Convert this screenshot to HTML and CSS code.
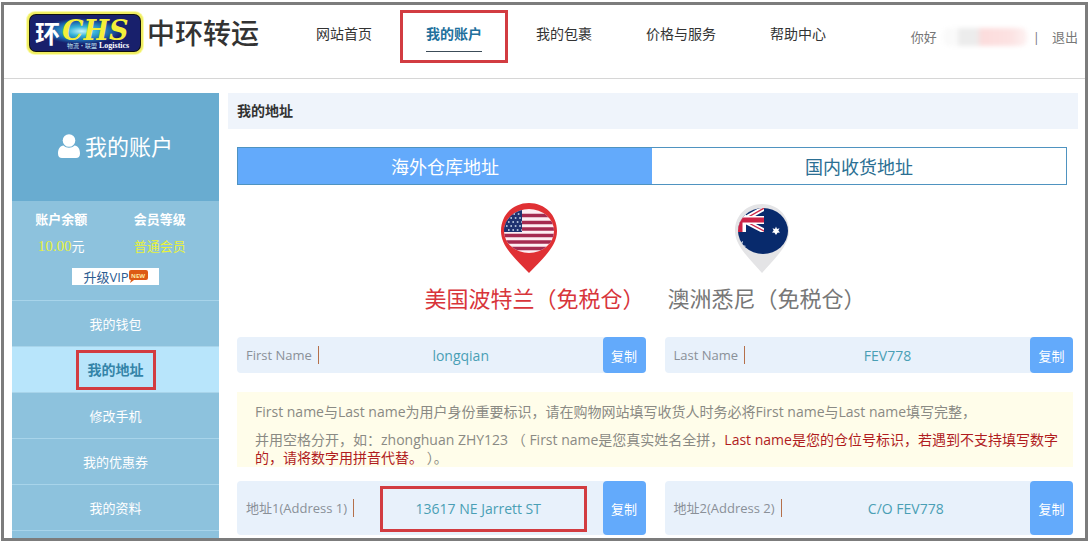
FILE: index.html
```html
<!DOCTYPE html>
<html lang="zh-CN">
<head>
    <meta charset="UTF-8">
    <meta name="viewport" content="width=device-width, initial-scale=1.0">
    <title>我的地址</title>
    <link rel="stylesheet" href="styles.css">
</head>
<body>
    <div class="page">
        <header class="header">
            <div class="logo">
                <svg class="logo-badge" viewBox="0 0 118 44" role="img" aria-label="CHS Logistics">
                    <defs>
                        <radialGradient id="glow" cx="0.47" cy="0.45" r="0.36">
                            <stop offset="0" stop-color="#c8f4fa"/>
                            <stop offset="0.35" stop-color="#35b3d8"/>
                            <stop offset="0.75" stop-color="#1a5fa8"/>
                            <stop offset="1" stop-color="#18206c"/>
                        </radialGradient>
                    </defs>
                    <rect x="0" y="0" width="118" height="44" rx="9" fill="#fbfbb0"/>
                    <rect x="1" y="1" width="116" height="42" rx="8" fill="#f0ee62"/>
                    <rect x="3" y="3" width="112" height="38" rx="7" fill="#111"/>
                    <rect x="4" y="4" width="110" height="36" rx="6" fill="url(#glow)"/>
                    <text class="badge-huan" x="9" y="32">环</text>
                    <text class="badge-chs" x="36" y="29">CHS</text>
                    <text class="badge-small-cn" x="41" y="37">物流·联盟</text>
                    <text class="badge-small" x="73" y="37">Logistics</text>
                </svg>
                <span class="logo-name">中环转运</span>
            </div>
            <nav class="nav">
                <a href="#">网站首页</a>
                <a href="#" class="active marked">我的账户</a>
                <a href="#">我的包裹</a>
                <a href="#">价格与服务</a>
                <a href="#">帮助中心</a>
            </nav>
            <div class="user">
                <span>你好</span>
                <span class="user-name"></span>
                <span>|</span>
                <a href="#">退出</a>
            </div>
        </header>

        <div class="content">
            <aside class="sidebar">
                <h2 class="side-title">
                    <svg class="side-icon" viewBox="0 0 22 24" aria-hidden="true">
                        <path d="M5.500 11.500C2 12 0 15 0 19.500C0 22.500 1.500 24 4 24H18C20.500 24 22 22.500 22 19.500C22 15 20 12 16.500 11.500C15 13 13 13.700 11 13.700C9 13.700 7 13 5.500 11.500Z" fill="#fff"/>
                        <circle cx="11" cy="6.500" r="6.300" fill="#fff"/>
                    </svg>
                    <span>我的账户</span>
                </h2>
                <div class="account">
                    <dl class="account-info">
                        <div>
                            <dt>账户余额</dt>
                            <dd><span class="money">10.00</span>元</dd>
                        </div>
                        <div>
                            <dt>会员等级</dt>
                            <dd class="level">普通会员</dd>
                        </div>
                    </dl>
                    <a href="#" class="vip">升级VIP<svg class="vip-new" viewBox="0 0 19 13" aria-hidden="true">
                            <path d="M2 0H17Q19 0 19 2V8Q19 10 17 10H5L1 13L2 10Q0 10 0 8V2Q0 0 2 0Z" fill="#dd5a14"/>
                            <text x="2" y="8">NEW</text>
                        </svg></a>
                </div>
                <ul class="menu">
                    <li><a href="#">我的钱包</a></li>
                    <li class="active"><a href="#" class="marked">我的地址</a></li>
                    <li><a href="#">修改手机</a></li>
                    <li><a href="#">我的优惠券</a></li>
                    <li><a href="#">我的资料</a></li>
                    <li></li>
                </ul>
            </aside>

            <main class="main">
                <h1 class="main-title">我的地址</h1>
                <div class="tabs">
                    <button type="button" class="active">海外仓库地址</button>
                    <button type="button">国内收货地址</button>
                </div>

                <div class="stores">
                    <a href="#" class="store active">
                        <svg class="pin" viewBox="0 0 56 70" aria-hidden="true">
                            <defs>
                                <clipPath id="us"><ellipse cx="28" cy="28" rx="25" ry="22"/></clipPath>
                            </defs>
                            <path d="M28 0C12 0 0 12 0 28C0 44 15 56 28 70C41 56 56 44 56 28C56 12 44 0 28 0Z" fill="#e03034"/>
                            <g clip-path="url(#us)">
                                <rect x="3" y="6" width="50" height="44" fill="#fdeef2"/>
                                <path d="M3 12.500H53M3 19.500H53M3 26H53M3 32.500H53M3 39H53M3 45.500H53" stroke="#a52a50" stroke-width="3.400"/>
                                <rect x="3" y="5" width="18" height="24" fill="#1f3270"/>
                                <path d="M8 11H21M5 15H21M7 19H21M5 23H21M7 27H21" stroke="#d5e2f2" stroke-width="1.600" stroke-dasharray="1.600 2.800"/>
                            </g>
                        </svg>
                        <span>美国波特兰（免税仓）</span>
                    </a>
                    <a href="#" class="store">
                        <svg class="pin" viewBox="0 0 56 70" aria-hidden="true">
                            <defs>
                                <clipPath id="au"><ellipse cx="29" cy="28" rx="25" ry="23"/></clipPath>
                                <clipPath id="jack"><rect x="3" y="4" width="27" height="25"/></clipPath>
                            </defs>
                            <path d="M28 1C13 1 1 12 1 28C1 43 16 56 28 70C40 56 55 43 55 28C55 12 43 1 28 1Z" fill="#e4e4e6"/>
                            <g clip-path="url(#au)">
                                <rect x="3" y="4" width="52" height="48" fill="#082a6c"/>
                                <g clip-path="url(#jack)">
                                    <path d="M9 17L32 4M9 17L32 29" stroke="#fff" stroke-width="5"/>
                                    <path d="M9 17L32 4M9 17L32 29" stroke="#d02a4a" stroke-width="1.400"/>
                                    <path d="M8 4V30M0 17H30" stroke="#fff" stroke-width="8"/>
                                    <path d="M6 4V30M0 17H30" stroke="#cc2346" stroke-width="5"/>
                                </g>
                                <path d="M42 23.500L43 26L45.500 25.300L44.300 27.600L46 29.500L43.500 29.700L42 32L40.500 29.700L38 29.500L39.700 27.600L38.500 25.300L41 26Z" fill="#fff"/>
                                <path d="M2 36L6 40L9 38L8 42L12 43L9 45L11 49L6 48L2 50Z" fill="#fff"/>
                            </g>
                        </svg>
                        <span>澳洲悉尼（免税仓）</span>
                    </a>
                </div>

                <div class="fields">
                    <div class="field">
                        <label for="first-name">First Name</label>
                        <input type="text" id="first-name" value="longqian" readonly>
                        <button type="button" onclick="copyField('first-name')">复制</button>
                    </div>
                    <div class="field">
                        <label for="last-name">Last Name</label>
                        <input type="text" id="last-name" value="FEV778" readonly>
                        <button type="button" onclick="copyField('last-name')">复制</button>
                    </div>
                </div>

                <div class="note">
                    <p>First name与Last name为用户身份重要标识，请在购物网站填写收货人时务必将First name与Last name填写完整，</p>
                    <p>并用空格分开，如：zhonghuan ZHY123 （ First name是您真实姓名全拼，<em>Last name是您的仓位号标识，若遇到不支持填写数字的，请将数字用拼音代替。</em> ）。</p>
                </div>

                <div class="fields tall">
                    <div class="field">
                        <label for="address-1">地址1(Address 1)</label>
                        <div class="value marked">
                            <input type="text" id="address-1" value="13617 NE Jarrett ST" readonly>
                        </div>
                        <button type="button" onclick="copyField('address-1')">复制</button>
                    </div>
                    <div class="field">
                        <label for="address-2">地址2(Address 2)</label>
                        <input type="text" id="address-2" value="C/O FEV778" readonly>
                        <button type="button" onclick="copyField('address-2')">复制</button>
                    </div>
                </div>
            </main>
        </div>
    </div>

    <script>
        function copyField(id) {
            var input = document.getElementById(id);
            input.select();
            document.execCommand('copy');
        }
    </script>
</body>
</html>
```
FILE: styles.css
```css
* {
    box-sizing: border-box;
}
body {
    margin: 0;
    padding: 2px 1px 1px;
    height: 100vh;
    background-color: #fff;
    color: #333;
    font-family: "Open Sans", "Noto Sans CJK SC", sans-serif;
    font-size: 14px;
    line-height: 18px;
}
a {
    color: inherit;
    text-decoration: none;
}
h1, h2, p, dl, dd, ul {
    margin: 0;
    padding: 0;
}
button, input {
    font-family: inherit;
    font-size: 14px;
}
button {
    border: 0;
    padding: 0;
    cursor: pointer;
}
.page {
    height: 100%;
    border: 3px solid #7c7c7c;
    overflow: hidden;
}

/* header */
.header {
    display: flex;
    align-items: flex-start;
    height: 74px;
    padding: 6px 7px 0 22px;
    border-bottom: 1px solid #d6d6d6;
}
.logo {
    display: flex;
    align-items: center;
    gap: 3px;
}
.logo-badge {
    width: 118px;
    height: 44px;
}
.logo-name {
    font-size: 28px;
    line-height: 42px;
    font-weight: 500;
    color: #333;
}
.badge-huan {
    font: bold 25px "Noto Sans CJK SC", sans-serif;
    fill: #fff;
}
.badge-chs {
    font: italic bold 27px "DejaVu Serif", serif;
    fill: #f4ee3a;
}
.badge-small {
    font: bold 8px "Liberation Serif", serif;
    fill: #fff;
}
.badge-small-cn {
    font: 6px "Noto Sans CJK SC", sans-serif;
    fill: #bfe6f4;
}
.nav {
    display: flex;
    gap: 54px;
    margin-left: 57px;
    padding-top: 14px;
}
.nav a {
    position: relative;
    padding-bottom: 8px;
}
.nav .active {
    color: #22709c;
    font-weight: bold;
    border-bottom: 1px solid #3c4c58;
}
.user {
    display: flex;
    align-items: center;
    gap: 6px;
    margin-left: auto;
    padding-top: 17px;
    font-size: 13px;
    color: #777;
}
.user a {
    margin-left: 6px;
}
.user-name {
    width: 84px;
    height: 18px;
    border-radius: 6px;
    background: linear-gradient(90deg, #fafafa 16%, #ececec 20%, #ececec 40%, #fcdcdc 46%, #fce2e2 80%, #fdf2f2);
    filter: blur(2px);
}

/* red frames around the steps to follow */
.marked {
    position: relative;
}
.marked::after {
    content: "";
    position: absolute;
    border: 3px solid #d23c41;
    pointer-events: none;
}
.nav .marked::after {
    inset: -15px -26px -12px;
}
.menu .marked::after {
    inset: -10px -12px -11px;
}
.value.marked::after {
    inset: 5px 16px 3px 26px;
}

/* sidebar */
.content {
    display: flex;
    gap: 9px;
    padding: 14px 7px 0 8px;
}
.sidebar {
    flex: 0 0 207px;
    background-color: #8dc2dd;
    color: #fff;
    text-align: center;
    font-size: 13px;
}
.side-title {
    display: flex;
    justify-content: center;
    align-items: center;
    gap: 5px;
    height: 108px;
    padding-bottom: 2px;
    background-color: #69acd0;
    font-size: 22px;
    font-weight: normal;
}
.side-icon {
    width: 22px;
    height: 24px;
}
.account {
    padding-top: 9px;
    padding-bottom: 15px;
}
.account-info {
    display: grid;
    grid-template-columns: 1fr 1fr;
    padding-right: 10px;
}
.account-info dt {
    font-weight: bold;
    margin-bottom: 9px;
}
.money {
    font-family: "Liberation Serif", serif;
    font-size: 15px;
    color: #e8f23c;
}
.level {
    color: #e8f23c;
}
.vip {
    display: flex;
    justify-content: center;
    align-items: center;
    width: 87px;
    height: 17px;
    margin: 13px auto 0;
    background-color: #fff;
    color: #2c5d92;
}
.vip-new {
    width: 19px;
    height: 13px;
}
.vip-new text {
    font: bold 6px "Open Sans", sans-serif;
    fill: #ffe9a0;
}
.menu {
    list-style: none;
}
.menu li {
    height: 46px;
    padding-top: 14px;
    border-top: 1px solid #a8d4ea;
}
.menu .active {
    background-color: #b8e5fb;
    color: #3484a8;
    font-size: 14px;
    font-weight: bold;
}

/* main */
.main {
    flex: 1;
}
.main-title {
    padding: 9px;
    background-color: #eff4fb;
    font-size: 14px;
}
.tabs {
    display: flex;
    height: 38px;
    margin: 18px 11px 0 9px;
    border: 1px solid #4f93c0;
}
.tabs button {
    flex: 1;
    background-color: #fff;
    color: #2b6f93;
    font-size: 18px;
}
.tabs .active {
    background-color: #63aafb;
    color: #fff;
}
.stores {
    display: flex;
    justify-content: center;
    gap: 23px;
    margin: 18px 16px 0 0;
}
.store {
    display: flex;
    flex-direction: column;
    align-items: center;
    color: #777;
    font-size: 22px;
    line-height: 26px;
}
.store.active {
    color: #d8353b;
}
.pin {
    width: 56px;
    height: 70px;
    margin: 0 10px 12px 0;
}
.fields {
    display: grid;
    grid-template-columns: 1fr 1fr;
    gap: 19px;
    margin: 26px 5px 0 9px;
}
.field {
    display: flex;
    align-items: center;
    height: 36px;
    padding-left: 9px;
    border-radius: 4px;
    background-color: #e8f1fb;
    color: #8a9098;
}
.tall {
    margin-top: 14px;
}
.tall .field {
    height: 54px;
}
.field label {
    padding-right: 6px;
    border-right: 1px solid #b5704a;
    font-size: 13px;
}
.field input {
    flex: 1;
    width: 100%;
    min-width: 0;
    border: 0;
    padding: 0;
    background: none;
    color: #4a9fb5;
    text-align: center;
}
.value {
    flex: 1;
    display: flex;
    align-self: stretch;
}
.field button {
    align-self: stretch;
    width: 43px;
    border-radius: 4px;
    background-color: #63aafb;
    color: #fff;
    font-size: 13px;
}
.note {
    margin: 19px 5px 0 9px;
    padding: 11px 5px 0 18px;
    background-color: #fffdea;
    color: #8a8a84;
}
.note p + p {
    margin-top: 10px;
}
.note em {
    color: #b01c1e;
    font-style: normal;
}
```
